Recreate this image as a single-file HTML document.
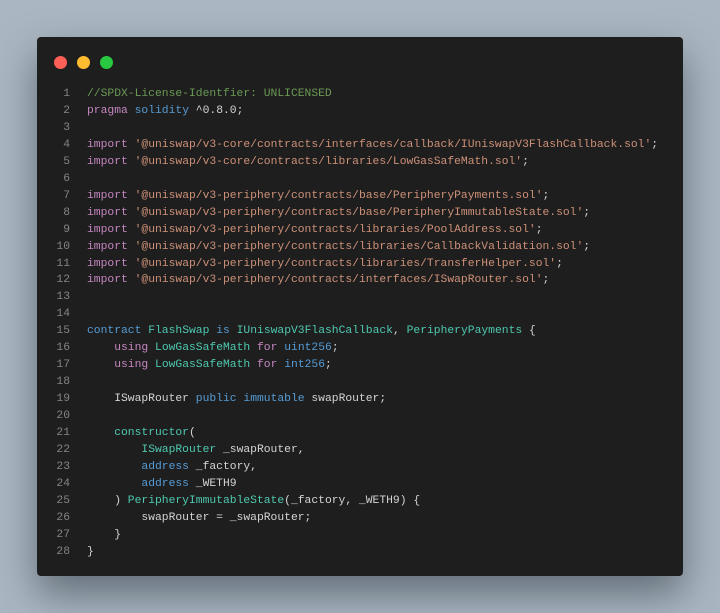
<!DOCTYPE html>
<html><head><style>
html,body{margin:0;padding:0;}
body{width:720px;height:613px;background:#aab6c1;position:relative;overflow:hidden;font-family:"Liberation Mono",monospace;}
.win{position:absolute;left:37px;top:37px;width:646px;height:539px;background:#1e1e1e;border-radius:4px;box-shadow:0 18px 40px rgba(40,50,60,0.55);}
.dot{position:absolute;top:19px;width:13px;height:13px;border-radius:50%;}
pre{position:absolute;left:0;top:49px;margin:0;font-family:"Liberation Mono",monospace;font-size:11.33px;line-height:16.96px;color:#d4d4d4;white-space:pre;}
.n{display:inline-block;width:33px;text-align:right;color:#858585;margin-right:17px;}
.c{color:#6a9955}.k{color:#c586c0}.b{color:#569cd6}.t{color:#4ec9b0}.s{color:#ce9178}
</style></head><body>
<div class="win">
<div class="dot" style="left:17px;background:#fe5f57"></div>
<div class="dot" style="left:40px;background:#febc2e"></div>
<div class="dot" style="left:63px;background:#28c840"></div>
<pre><span class="n">1</span><span class="c">//SPDX-License-Identfier: UNLICENSED</span>
<span class="n">2</span><span class="k">pragma</span> <span class="b">solidity</span> ^0.8.0;
<span class="n">3</span>
<span class="n">4</span><span class="k">import</span> <span class="s">'@uniswap/v3-core/contracts/interfaces/callback/IUniswapV3FlashCallback.sol'</span>;
<span class="n">5</span><span class="k">import</span> <span class="s">'@uniswap/v3-core/contracts/libraries/LowGasSafeMath.sol'</span>;
<span class="n">6</span>
<span class="n">7</span><span class="k">import</span> <span class="s">'@uniswap/v3-periphery/contracts/base/PeripheryPayments.sol'</span>;
<span class="n">8</span><span class="k">import</span> <span class="s">'@uniswap/v3-periphery/contracts/base/PeripheryImmutableState.sol'</span>;
<span class="n">9</span><span class="k">import</span> <span class="s">'@uniswap/v3-periphery/contracts/libraries/PoolAddress.sol'</span>;
<span class="n">10</span><span class="k">import</span> <span class="s">'@uniswap/v3-periphery/contracts/libraries/CallbackValidation.sol'</span>;
<span class="n">11</span><span class="k">import</span> <span class="s">'@uniswap/v3-periphery/contracts/libraries/TransferHelper.sol'</span>;
<span class="n">12</span><span class="k">import</span> <span class="s">'@uniswap/v3-periphery/contracts/interfaces/ISwapRouter.sol'</span>;
<span class="n">13</span>
<span class="n">14</span>
<span class="n">15</span><span class="b">contract</span> <span class="t">FlashSwap</span> <span class="b">is</span> <span class="t">IUniswapV3FlashCallback</span>, <span class="t">PeripheryPayments</span> {
<span class="n">16</span>    <span class="k">using</span> <span class="t">LowGasSafeMath</span> <span class="k">for</span> <span class="b">uint256</span>;
<span class="n">17</span>    <span class="k">using</span> <span class="t">LowGasSafeMath</span> <span class="k">for</span> <span class="b">int256</span>;
<span class="n">18</span>
<span class="n">19</span>    ISwapRouter <span class="b">public</span> <span class="b">immutable</span> swapRouter;
<span class="n">20</span>
<span class="n">21</span>    <span class="t">constructor</span>(
<span class="n">22</span>        <span class="t">ISwapRouter</span> _swapRouter,
<span class="n">23</span>        <span class="b">address</span> _factory,
<span class="n">24</span>        <span class="b">address</span> _WETH9
<span class="n">25</span>    ) <span class="t">PeripheryImmutableState</span>(_factory, _WETH9) {
<span class="n">26</span>        swapRouter = _swapRouter;
<span class="n">27</span>    }
<span class="n">28</span>}</pre>
</div>
</body></html>
